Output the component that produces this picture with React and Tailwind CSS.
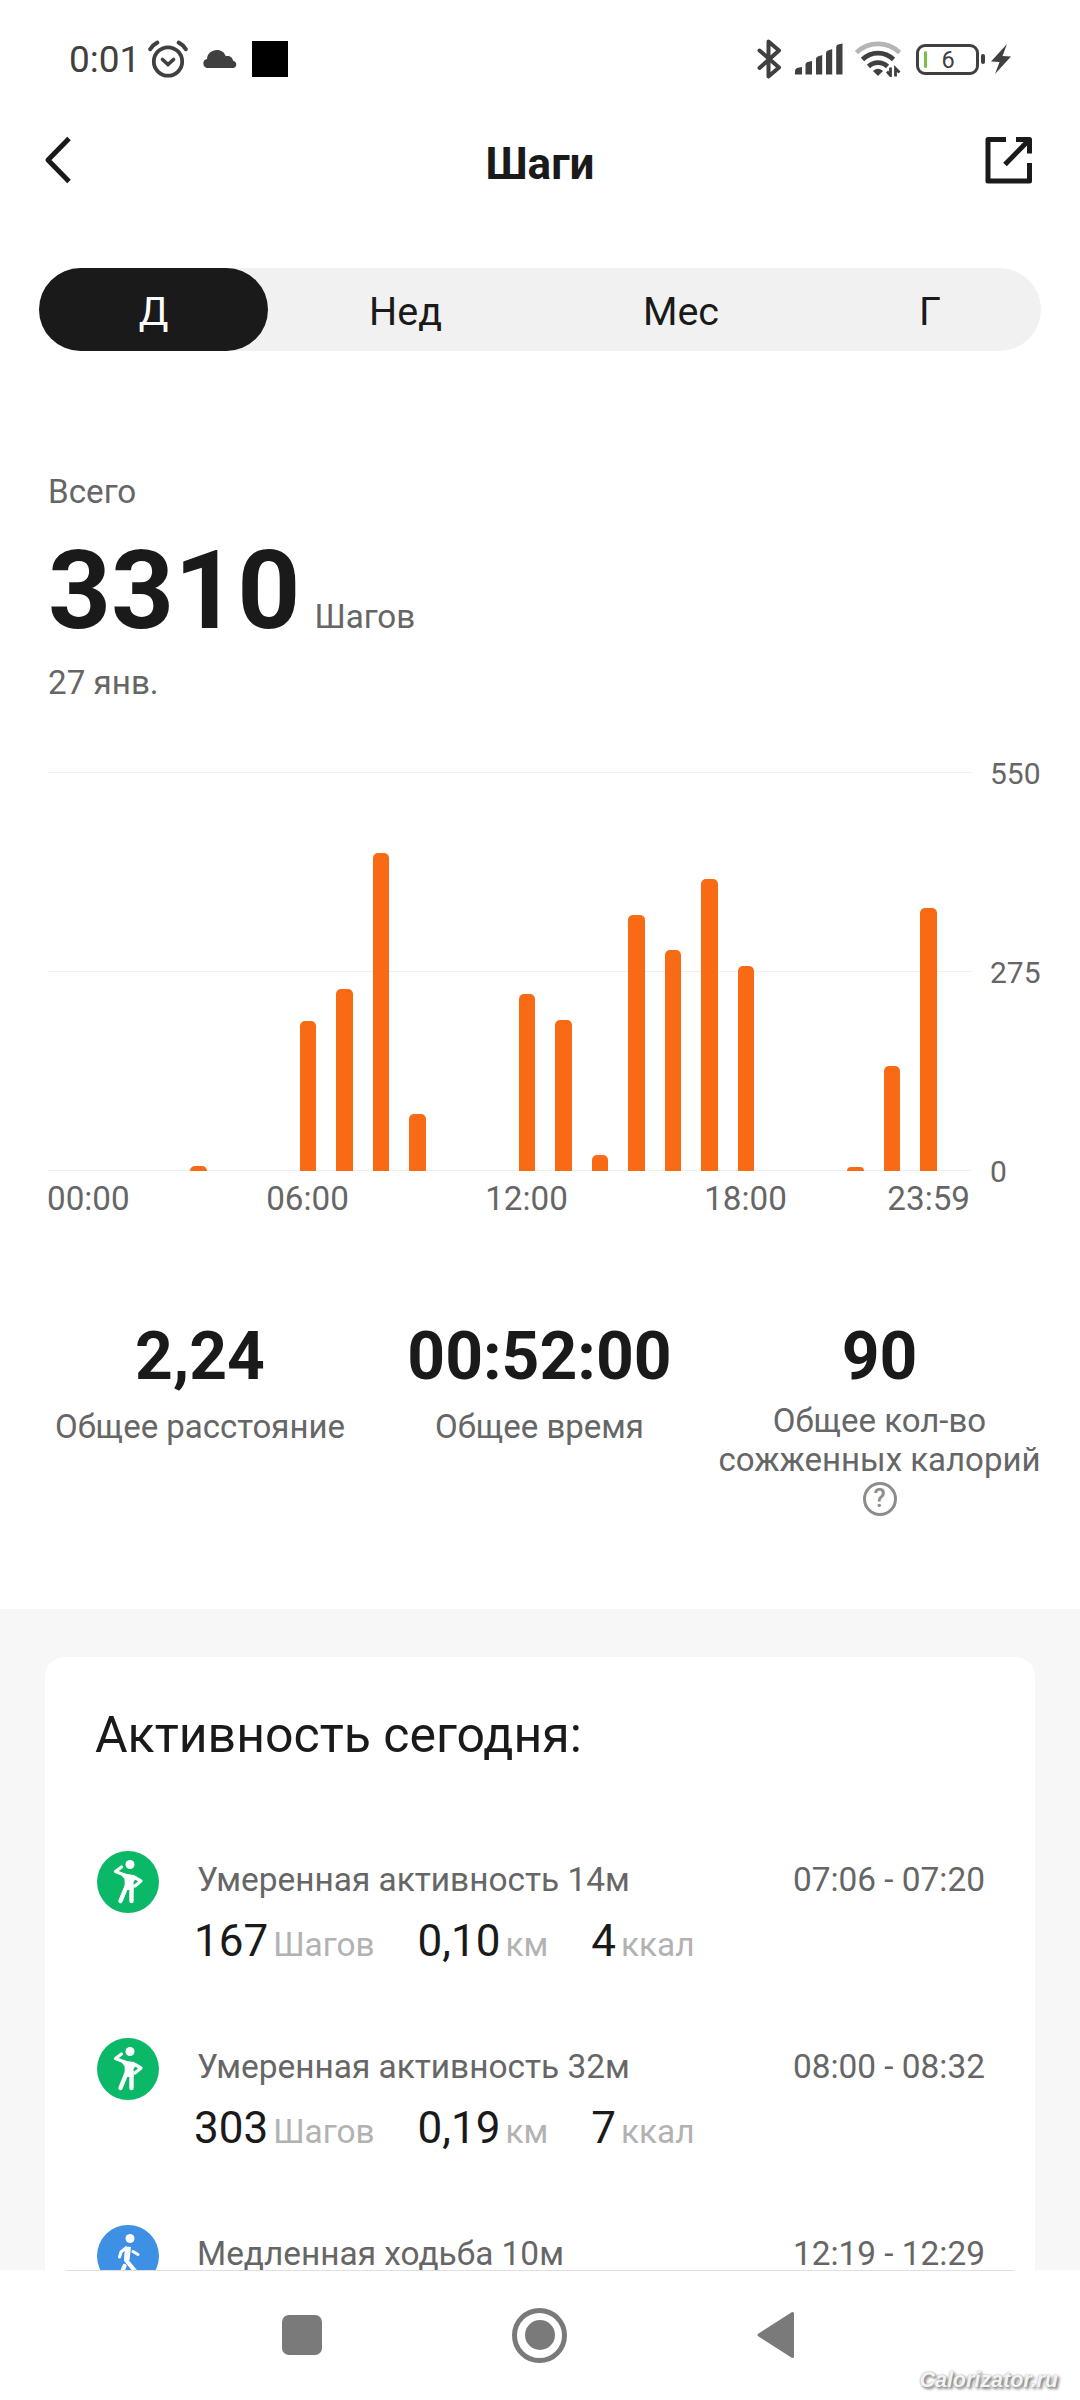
import { useState } from "react";

const tabs = [
  { id: "day", label: "Д", width: "w-[229px]" },
  { id: "week", label: "Нед", width: "w-[275px]" },
  { id: "month", label: "Мес", width: "w-[276px]" },
  { id: "year", label: "Г", width: "w-[222px]" },
];

// steps per hour, 00:00 - 23:59
const hours = [0, 0, 0, 7, 0, 0, 207, 251, 438, 78, 0, 0, 244, 208, 22, 353, 304, 402, 283, 0, 0, 6, 145, 362];
const maxSteps = 550;

const activities = [
  { type: "active", title: "Умеренная активность 14м", time: "07:06 - 07:20", steps: "167", km: "0,10", kcal: "4" },
  { type: "active", title: "Умеренная активность 32м", time: "08:00 - 08:32", steps: "303", km: "0,19", kcal: "7" },
  { type: "walk", title: "Медленная ходьба 10м", time: "12:19 - 12:29" },
];

export default function App() {
  const [tab, setTab] = useState("day");

  return (
    <div className="flex h-[2400px] w-[1080px] flex-col overflow-hidden bg-white font-['Roboto',sans-serif] text-[#1a1a1a]">
      <StatusBar />
      <Header />
      <Tabs tab={tab} setTab={setTab} />
      <Total />
      <Chart />
      <Stats />
      <div className="min-h-0 flex-1 overflow-hidden bg-[#f7f7f7] px-[45px] pt-12">
        <div className="h-[640px] rounded-t-[20px] bg-white pt-[49px] pr-[50px] pl-[51px]">
          <h2 className="ml-[-1px] text-[50px] leading-[58px]">Активность сегодня:</h2>
          <div className="mt-[87px]">
            {activities.map((item) => (
              <Activity key={item.time} item={item} />
            ))}
          </div>
        </div>
      </div>
      <NavBar />
    </div>
  );
}

function StatusBar() {
  return (
    <div className="flex h-[118px] shrink-0 items-center justify-between pr-[69px] pl-[69px] text-[#404040]">
      <div className="flex items-center">
        <span className="w-[79px] pt-[2px] text-[37px] leading-[42px]">0:01</span>
        <svg className="h-[38px] w-[40px]" viewBox="0 0 40 38" fill="none" stroke="currentColor" strokeLinecap="round">
          <circle cx="20" cy="21.5" r="14.2" strokeWidth="3.8" />
          <path d="M14.5 19.5l5.5 5 5.5-5" strokeWidth="3.6" />
          <path d="M2.2 9.2Q5 4.6 9.3 2.6M37.8 9.2Q35 4.6 30.7 2.6" strokeWidth="4" />
        </svg>
        <svg className="ml-[15px] h-[20px] w-[34px]" viewBox="0 0 34 20" fill="currentColor">
          <path d="M4.800 19a4.600 4.600 0 0 1-.8-9.100C4.300 4.500 8.500 1 14 1c4.200 0 7.500 2.500 8.700 6.200 4-.8 7 1.400 7.300 4.600 4.800 1 4 7.200-.2 7.200z" />
        </svg>
        <div className="ml-[15px] h-[36px] w-[36px] bg-black" />
      </div>
      <div className="flex items-center">
        <svg className="h-[40px] w-[25px]" viewBox="0 0 25 40" fill="none" stroke="currentColor" strokeWidth="4" strokeLinecap="round" strokeLinejoin="round">
          <path d="M2.5 11.5L22 28.500 11.500 37.500V2.500L22 11.500 2.500 29" />
        </svg>
        <svg className="ml-[13px] h-[32px] w-[48px]" viewBox="0 0 48 32" fill="currentColor">
          <path d="M0 31.500v-3q0-3 3-3.700l4-.8v7.500zM10.500 31.500V21.500q0-2 2-2.600l4.500-1v13.600zM21 31.500V16q0-2 1.800-2.600l4.400-1.400v19.500zM31 31.500V10q0-2 2-2.600L37.200 6v25.500zM41.200 31.500V4q0-2 1.800-2.600L47.500.5v31z" />
        </svg>
        <svg className="ml-[12px] h-[36px] w-[46px]" viewBox="0 0 46 36" fill="none" stroke="currentColor" strokeWidth="4.600">
          <path d="M1.500 11.500a31 31 0 0 1 43 0" stroke="#b5b5b5" />
          <path d="M7.500 18.500a22 22 0 0 1 31 0" />
          <path d="M13.500 25.500a13.500 13.500 0 0 1 19 0" />
          <path d="M18 30q5-4.500 10 0l-5 5z" fill="currentColor" stroke="none" />
          <path d="M35.500 26.500v8l-3.500-4M40.500 35.500v-8l4 4" strokeWidth="2.800" />
        </svg>
        <div className="ml-[15px] flex h-[31px] w-[63px] items-center justify-center rounded-[9px] border-[3px] border-current">
          <div className="h-[17px] w-[3px] rounded bg-[#7bc043]" />
          <span className="w-[45px] pt-[2px] pr-[2px] text-center text-[23.500px] leading-[24px]">6</span>
        </div>
        <div className="ml-[2px] h-[10px] w-[4px] rounded-sm bg-current" />
        <svg className="ml-[6px] h-[30px] w-[20px]" viewBox="0 0 20 30" fill="currentColor">
          <path d="M16 0L0 17.500l8.500.5L4 30 20 12.500l-8.500-.5z" />
        </svg>
      </div>
    </div>
  );
}

function Header() {
  return (
    <div className="flex h-[150px] shrink-0 items-start justify-between pt-[18px] pr-[48px] pl-[44px]">
      <svg className="h-[48px] w-[47px]" viewBox="0 0 47 48" fill="none" stroke="currentColor" strokeWidth="5" strokeLinejoin="round">
        <path d="M25 2.500L4 24l21 21.500" />
      </svg>
      <h1 className="pt-[2px] pl-[4px] text-[44px] leading-[52px] font-bold">Шаги</h1>
      <svg className="h-[48px] w-[47px]" viewBox="0 0 47 48" fill="none" stroke="currentColor" strokeWidth="5" strokeLinejoin="round">
        <path d="M21 3.500H3v41.500h41.500V27" />
        <path d="M31 3.500h13.500v14M44 4L20 28.500" />
      </svg>
    </div>
  );
}

function Tabs({ tab, setTab }) {
  return (
    <div className="mx-[39px] flex h-[83px] shrink-0 rounded-full bg-[#f1f1f1]">
      {tabs.map(({ id, label, width }) => (
        <button
          key={id}
          onClick={() => setTab(id)}
          className={`${width} rounded-full pt-[5px] text-[39.500px] leading-[46px] ${tab === id ? "bg-[#1a1a1a] text-white" : ""}`}
        >
          {label}
        </button>
      ))}
    </div>
  );
}

function Total() {
  return (
    <div className="h-[421px] shrink-0 pt-[122px] pl-[48px] text-[33.200px] leading-[38px] text-[#666666]">
      <p>Всего</p>
      <div className="mt-[16px] flex items-baseline">
        <span className="text-[110px] leading-[128px] font-bold text-[#1a1a1a]">3310</span>
        <span className="ml-[14px]">Шагов</span>
      </div>
      <p className="mt-[9px]">27 янв.</p>
    </div>
  );
}

function Chart() {
  return (
    <div className="flex h-[540px] shrink-0 pl-[48px] text-[#666666]">
      <div className="w-[923px]">
        <div className="relative h-[399px]">
          <div className="flex h-full flex-col justify-between">
            <div className="h-px bg-[#f0f0f0]" />
            <div className="h-px bg-[#f0f0f0]" />
            <div className="h-px bg-[#f0f0f0]" />
          </div>
          <div className="absolute inset-0 flex items-end pr-[24px] pl-[22.500px]">
            {hours.map((steps, i) => (
              <div key={i} className="flex h-full w-[36.500px] shrink-0 items-end justify-center">
                <div className="w-[16.500px] rounded-t-[5px] bg-[#f86b14]" style={{ height: `${(steps / maxSteps) * 100}%` }} />
              </div>
            ))}
          </div>
        </div>
        <div className="mt-[9px] flex text-[33.200px] leading-[38px]">
          <span className="ml-[-1px] w-[151px]">00:00</span>
          <span className="w-[219px] text-center">06:00</span>
          <span className="w-[219px] text-center">12:00</span>
          <span className="w-[219px] text-center">18:00</span>
          <span className="flex w-[115px] justify-end">23:59</span>
        </div>
      </div>
      <div className="mt-[-16px] flex h-[434px] flex-col justify-between pl-[19px] text-[30px] leading-[36px]">
        <span>550</span>
        <span>275</span>
        <span>0</span>
      </div>
    </div>
  );
}

function Stats() {
  return (
    <div className="flex h-[297px] shrink-0 pl-[31px] text-center text-[33px] text-[#666666]">
      <div className="w-[338px] pt-[6px]">
        <div className="text-[66px] leading-[78px] font-bold text-[#1a1a1a]">2,24</div>
        <p className="mt-[12px] leading-[38px]">Общее расстояние</p>
      </div>
      <div className="w-[341px] pt-[6px]">
        <div className="text-[66px] leading-[78px] font-bold text-[#1a1a1a]">00:52:00</div>
        <p className="mt-[12px] leading-[38px]">Общее время</p>
      </div>
      <div className="w-[339px] pt-[6px]">
        <div className="text-[66px] leading-[78px] font-bold text-[#1a1a1a]">90</div>
        <p className="mt-[6px] leading-[38.500px]">
          Общее кол-во
          <br />
          сожженных калорий
        </p>
        <div className="mx-auto mt-[3px] flex h-[34px] w-[34px] items-center justify-center rounded-full border-[3px] border-[#8c8c8c] text-[25px] leading-[28px] font-medium text-[#8c8c8c]">?</div>
      </div>
    </div>
  );
}

function Activity({ item }) {
  return (
    <div className="flex h-[187px]">
      {item.type === "active" ? <ActiveIcon /> : <WalkIcon />}
      <div className="ml-[37px] flex-1">
        <div className="flex justify-between pt-[9px] text-[33.400px] leading-[40px] text-[#666666]">
          <span>{item.title}</span>
          <span>{item.time}</span>
        </div>
        {item.steps && (
          <div className="mt-[15px] ml-[-3px] flex items-baseline gap-[43px] leading-[52px]">
            <Value value={item.steps} unit="Шагов" />
            <Value value={item.km} unit="км" />
            <Value value={item.kcal} unit="ккал" />
          </div>
        )}
      </div>
    </div>
  );
}

function Value({ value, unit }) {
  return (
    <div className="flex items-baseline gap-[5px]">
      <span className="text-[44px]">{value}</span>
      <span className="text-[33.400px] text-[#b2b2b2]">{unit}</span>
    </div>
  );
}

function ActiveIcon() {
  return (
    <svg className="mt-[-1px] h-[64px] w-[64px] shrink-0" viewBox="0 0 64 64">
      <circle cx="32" cy="32" r="31" fill="#0ab868" />
      <circle cx="34" cy="14.500" r="4.500" fill="#fff" />
      <g fill="none" stroke="#fff" strokeLinecap="round" strokeLinejoin="round">
        <path d="M25.500 17l-6 4.500 9 3.500" strokeWidth="3.200" />
        <path d="M37 26.500l8 4.500-6 5" strokeWidth="3.200" />
        <path d="M31 35l-6.500 16M35.500 35v16" strokeWidth="4.400" />
      </g>
      <path d="M23 22.500l14 2.500 4 2-3.500 5v8h-8.500l-.5-11z" fill="#fff" />
    </svg>
  );
}

function WalkIcon() {
  return (
    <svg className="mt-[-1px] h-[64px] w-[64px] shrink-0" viewBox="0 0 64 64">
      <circle cx="32" cy="32" r="31" fill="#3d90e3" />
      <circle cx="34" cy="14.500" r="4.500" fill="#fff" />
      <g fill="none" stroke="#fff" strokeLinecap="round" strokeLinejoin="round">
        <path d="M30 24l-5 4-1.500 5M37 27.500l5 3" strokeWidth="3" />
        <path d="M32 25l-2 11 9 11 3 6M28.500 42l-2 5-4 6" strokeWidth="4.200" />
      </g>
      <path d="M29 22.500l6 .5-1.500 13h-5.500z" fill="#fff" />
    </svg>
  );
}

function NavBar() {
  return (
    <div className="relative h-[130px] shrink-0 bg-white text-[#7a7a7a]">
      <div className="mx-[66px] h-px bg-[#e0e0e0]" />
      <div className="flex h-[128px] items-center pl-[282px]">
        <div className="h-[40px] w-[40px] rounded-[7px] bg-current" />
        <div className="ml-[190px] flex h-[55px] w-[55px] items-center justify-center rounded-full border-[5px] border-current">
          <div className="h-[30px] w-[30px] rounded-full bg-current" />
        </div>
        <svg className="ml-[189px] h-[48px] w-[39px]" viewBox="0 0 39 48" fill="currentColor" stroke="currentColor" strokeWidth="3" strokeLinejoin="round">
          <path d="M3 24L36.500 2.500v43z" />
        </svg>
      </div>
      <span className="absolute right-[22px] bottom-[8px] font-['Liberation_Sans',sans-serif] text-[21.500px] leading-[24px] font-bold text-[#f4f4f4] italic [text-shadow:2px_2px_3px_#777,0_0_2px_#999]">
        Calorizator.ru
      </span>
    </div>
  );
}
